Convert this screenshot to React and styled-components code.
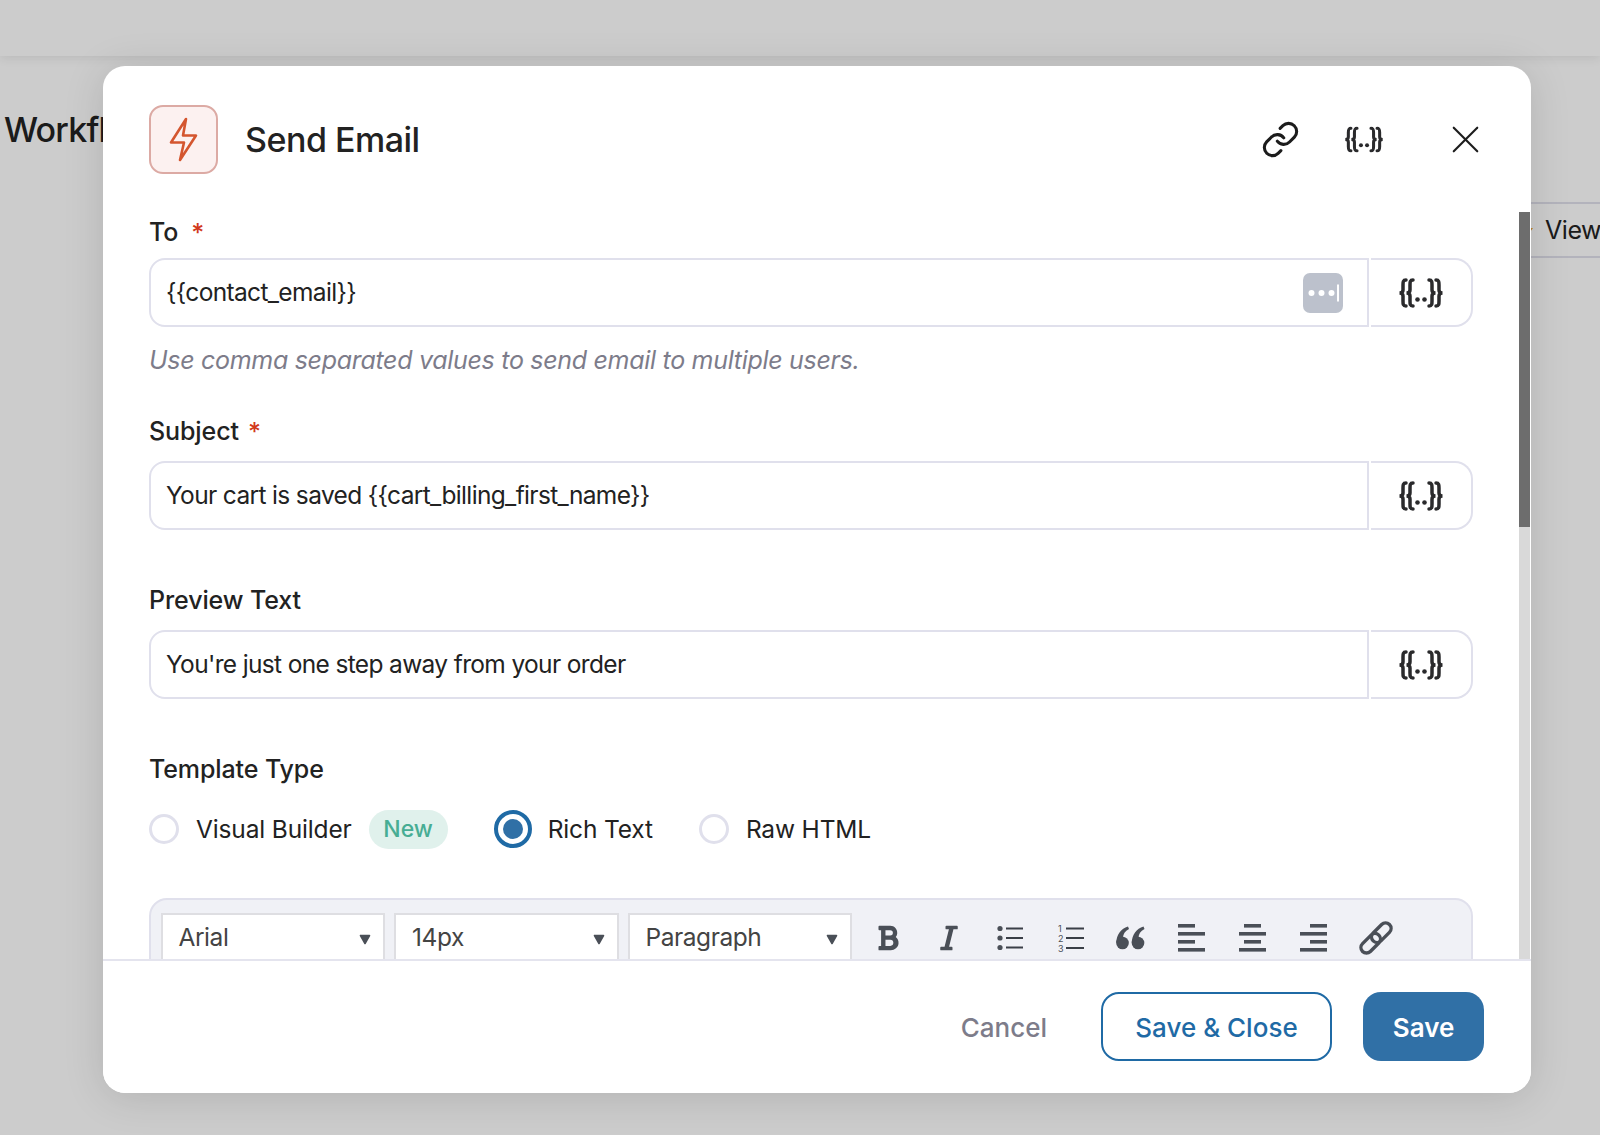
import React from "react";
import styled, { createGlobalStyle } from "styled-components";
import { Link, X } from "lucide-react";
import { FaBold, FaItalic } from "react-icons/fa";

const Global = createGlobalStyle`
  html, body { margin: 0; height: 100%; overflow: hidden; background: #fff; }
  #root { height: 100%; }
  * { box-sizing: border-box; }
  body { font-family: Inter, "Liberation Sans", sans-serif; color: #222; }
`;

const Page = styled.div`
  height: 100%;
  position: relative;
  overflow: hidden;
`;
const TopBar = styled.div`
  height: 56px;
  background: #fff;
  box-shadow: 0 2px 10px rgba(0, 0, 0, 0.09);
`;
const PageRow = styled.div`
  display: flex;
  justify-content: space-between;
  align-items: flex-start;
`;
const PageTitle = styled.h1`
  margin: 53px 0 0 4px;
  font-size: 34px;
  line-height: 42px;
  font-weight: 450;
  letter-spacing: -0.8px;
  color: #222;
`;
const ViewButton = styled.div`
  display: flex;
  align-items: center;
  gap: 11px;
  margin-top: 146px;
  margin-right: -23px;
  height: 56px;
  padding: 0 20px 0 24px;
  border: 2px solid #e0e0ec;
  font-size: 25px;
  letter-spacing: -0.5px;
  color: #222;
  white-space: nowrap;
`;
const Overlay = styled.div`
  position: absolute;
  inset: 0;
  background: rgba(0, 0, 0, 0.2);
`;
const Modal = styled.div`
  position: absolute;
  left: 103px;
  top: 66px;
  width: 1428px;
  height: 1027px;
  background: #fff;
  border-radius: 22px;
  box-shadow: 0 4px 40px rgba(0, 0, 0, 0.13);
  display: flex;
  flex-direction: column;
  overflow: hidden;
`;
const Header = styled.header`
  height: 146px;
  flex: none;
  display: flex;
  align-items: flex-start;
  padding: 39px 0 0 46px;
`;
const BoltBox = styled.div`
  width: 69px;
  height: 69px;
  flex: none;
  border-radius: 14px;
  border: 2px solid #dcaaa4;
  background: #fcf1f0;
  display: flex;
  align-items: center;
  justify-content: center;
`;
const Title = styled.h2`
  margin: 0 0 0 27px;
  font-size: 34px;
  line-height: 69px;
  font-weight: 450;
  letter-spacing: -0.5px;
  color: #222;
  flex: 1;
`;
const HeaderIcons = styled.div`
  display: flex;
  align-items: center;
  height: 68px;
  color: #111;
`;
const HeaderIcon = styled.span`
  width: ${(p) => p.$w}px;
  display: flex;
  justify-content: center;
  color: #1c1c1c;
`;
const Scroller = styled.div`
  position: relative;
  flex: 1;
  min-height: 0;
  overflow: hidden;
  padding: 6px 58px 0 46px;
`;
const ScrollTrack = styled.div`
  position: absolute;
  top: 0;
  bottom: 0;
  right: 1px;
  width: 11px;
  background: #d9d9d9;
`;
const ScrollThumb = styled.div`
  height: 315px;
  background: #6d6d6d;
`;
const FieldLabel = styled.div`
  display: flex;
  font-size: 25px;
  line-height: 28px;
  font-weight: 450;
  letter-spacing: -0.1px;
  color: #222;
  margin-top: ${(p) => p.$top}px;
  margin-bottom: ${(p) => p.$bottom}px;
`;
const Required = styled.span`
  color: #d2391c;
  margin-left: ${(p) => p.$gap}px;
  line-height: 28px;
  position: relative;
  top: 1px;
`;
const InputRow = styled.div`
  display: flex;
  height: 69px;
  gap: 2px;
`;
const InputBox = styled.div`
  flex: 1;
  display: flex;
  align-items: center;
  justify-content: space-between;
  padding: 0 24px 0 15px;
  border: 2px solid #e0e0ec;
  border-radius: 16px 0 0 16px;
  font-size: 24.5px;
  letter-spacing: -0.65px;
  color: #222;
`;
const FieldText = styled.span`
  margin-bottom: 2px;
`;
const AddOn = styled.div`
  width: 102px;
  flex: none;
  display: flex;
  align-items: center;
  justify-content: center;
  border: 2px solid #e0e0ec;
  border-left: 0;
  border-radius: 0 18px 18px 0;
`;
const Hint = styled.div`
  margin-top: 19px;
  font-size: 25px;
  line-height: 28px;
  font-style: italic;
  letter-spacing: -0.3px;
  color: #7d7c8a;
`;
const RadioRow = styled.div`
  display: flex;
  align-items: center;
  height: 40px;
  margin-top: 26px;
`;
const RadioOption = styled.div`
  display: flex;
  align-items: center;
  gap: ${(p) => (p.$checked ? 16 : 17)}px;
  margin-right: 46px;
`;
const RadioCircle = styled.span`
  flex: none;
  display: flex;
  align-items: center;
  justify-content: center;
  width: ${(p) => (p.$checked ? 38 : 30)}px;
  height: ${(p) => (p.$checked ? 38 : 30)}px;
  border-radius: 50%;
  border: ${(p) => (p.$checked ? "4px solid #1f6aa5" : "3.5px solid #e0e0ec")};
  background: #fff;
`;
const RadioDot = styled.span`
  width: 20px;
  height: 20px;
  border-radius: 50%;
  background: #3070a6;
`;
const RadioText = styled.span`
  font-size: 24.5px;
  letter-spacing: -0.15px;
  color: #222;
  white-space: nowrap;
`;
const NewPill = styled.span`
  display: flex;
  align-items: center;
  justify-content: center;
  width: 79px;
  height: 39px;
  border-radius: 20px;
  background: #e0f1ec;
  color: #47ad94;
  font-size: 23px;
  font-weight: 500;
`;
const Toolbar = styled.div`
  display: flex;
  align-items: flex-start;
  margin-top: 49px;
  height: 120px;
  padding: 13px 10px 0 9.5px;
  background: #f0f1f6;
  border: 2px solid #e0e0ec;
  border-radius: 18px;
`;
const SelectBox = styled.div`
  width: 224.5px;
  height: 50px;
  flex: none;
  margin-right: 9px;
  display: flex;
  align-items: center;
  justify-content: space-between;
  padding: 0 12px 0 16px;
  background: #fff;
  border: 2px solid #dedee2;
  font-size: 24.5px;
  letter-spacing: -0.45px;
  color: #444;
`;
const Caret = styled.svg`
  width: 12px;
  height: 11px;
  margin-top: 3px;
`;
const ToolButton = styled.span`
  width: ${(p) => p.$w || 61}px;
  height: 50px;
  flex: none;
  display: flex;
  align-items: center;
  justify-content: center;
  color: #4a4f57;
`;
const ToolGroup = styled.div`
  display: flex;
  margin-left: -3.5px;
`;
const Footer = styled.footer`
  height: 134px;
  flex: none;
  display: flex;
  align-items: center;
  justify-content: flex-end;
  padding: 0 47px 2px 0;
  background: #fff;
  border-top: 2px solid #e4e4ee;
`;
const CancelButton = styled.span`
  font-size: 26px;
  font-weight: 500;
  color: #7d7c8a;
  margin-right: 54px;
  padding-top: 2px;
`;
const OutlineButton = styled.span`
  display: flex;
  align-items: center;
  justify-content: center;
  width: 231px;
  height: 69px;
  margin-right: 31px;
  padding-top: 2px;
  border: 2px solid #1f6aa5;
  border-radius: 18px;
  color: #1f6aa5;
  font-size: 26px;
  font-weight: 500;
`;
const SolidButton = styled.span`
  display: flex;
  align-items: center;
  justify-content: center;
  width: 121px;
  height: 69px;
  padding-top: 2px;
  border-radius: 18px;
  background: #3070a6;
  color: #fff;
  font-size: 26px;
  font-weight: 600;
`;

const Braces = ({ w = 46, h = 30 }) => (
  <svg width={w} height={h} viewBox="0 0 46 30" fill="none" stroke="#2a2a2c" strokeWidth="3.5" strokeLinecap="round">
    <path d="M8 2C5 2 5 4 5 7v5c0 2-1.500 3-3.500 3 2 0 3.500 1 3.500 3v5c0 3 0 5 3 5" />
    <path d="M15 2c-3 0-3 2-3 5v5c0 2-1.500 3-3.500 3 2 0 3.500 1 3.500 3v5c0 3 0 5 3 5" />
    <path d="M38 2c3 0 3 2 3 5v5c0 2 1.500 3 3.500 3-2 0-3.500 1-3.500 3v5c0 3 0 5-3 5" />
    <path d="M31 2c3 0 3 2 3 5v5c0 2 1.500 3 3.500 3-2 0-3.500 1-3.500 3v5c0 3 0 5-3 5" />
    <circle cx="19.500" cy="21.500" r="2.300" fill="#2a2a2c" stroke="none" />
    <circle cx="26.500" cy="21.500" r="2.300" fill="#2a2a2c" stroke="none" />
  </svg>
);

const DotsKey = () => (
  <svg width="40" height="40" viewBox="0 0 40 40">
    <rect width="40" height="40" rx="7" fill="#bcc1cc" />
    <circle cx="8.500" cy="20" r="3" fill="#fff" />
    <circle cx="18.500" cy="20" r="3" fill="#fff" />
    <circle cx="28.500" cy="20" r="3" fill="#fff" />
    <rect x="34" y="11.500" width="2" height="17" fill="#fff" />
  </svg>
);

const Bolt = () => (
  <svg width="30" height="46" viewBox="0 0 30 46" fill="none" stroke="#d4562f" strokeWidth="2.6" strokeLinejoin="round">
    <path d="M17 2 2 25.500h13L11 43l16-24.500H14z" />
  </svg>
);

const DownCaret = () => (
  <Caret viewBox="0 0 12 11">
    <path d="M1.500 1.500h9L6 9.500z" fill="#4a4f57" stroke="#4a4f57" strokeWidth="1.600" strokeLinejoin="round" />
  </Caret>
);

const ListIcon = () => (
  <svg width="26" height="26" viewBox="0 0 26 26">
    <circle cx="3" cy="3.500" r="2.600" fill="#4a4f57" />
    <circle cx="3" cy="13" r="2.600" fill="#4a4f57" />
    <circle cx="3" cy="22.500" r="2.600" fill="#4a4f57" />
    <path d="M9 3.500h17M9 13h17M9 22.500h17" stroke="#3a3f47" strokeWidth="1.800" />
  </svg>
);

const NumberedIcon = () => (
  <svg width="26" height="28" viewBox="0 0 26 28">
    <text x="0" y="8" fontSize="9" fontFamily="Inter, sans-serif" fill="#4a4f57">1</text>
    <text x="0" y="18" fontSize="9" fontFamily="Inter, sans-serif" fill="#4a4f57">2</text>
    <text x="0" y="27.500" fontSize="9" fontFamily="Inter, sans-serif" fill="#4a4f57">3</text>
    <path d="M8 4.500h18M8 14h18M8 24h18" stroke="#3a3f47" strokeWidth="1.800" />
  </svg>
);

const QuoteIcon = () => (
  <svg width="29" height="24" viewBox="0 0 29 24" fill="#4a4f57">
    <circle cx="6.500" cy="17" r="6.300" />
    <path d="M.3 17C.3 9 5 2.500 12 .5l1 2.600C9 5 7 8.500 7 12z" />
    <circle cx="22" cy="17" r="6.300" />
    <path d="M15.800 17c0-8 4.700-14.500 11.700-16.500l1 2.600c-4 1.900-6 5.400-6 8.900z" />
  </svg>
);

const AlignIcon = ({ align }) => {
  const x = (w) => (align === "left" ? 0 : align === "center" ? (27 - w) / 2 : 27 - w);
  return (
    <svg width="27" height="28" viewBox="0 0 27 28" fill="#4a4f57">
      <rect x={x(17)} y="0" width="17" height="3.600" />
      <rect x={x(27)} y="8" width="27" height="3.600" />
      <rect x={x(17)} y="16" width="17" height="3.600" />
      <rect x={x(27)} y="24" width="27" height="3.600" />
    </svg>
  );
};

const ChainIcon = () => (
  <svg width="34" height="34" viewBox="0 0 34 34" fill="none" stroke="#4a4f57" strokeWidth="3.400">
    <g transform="rotate(-45 17 17)">
      <rect x="-2" y="11.500" width="23" height="11" rx="5.500" />
      <rect x="13" y="11.500" width="23" height="11" rx="5.500" />
    </g>
  </svg>
);

const Field = ({ label, gap, top, bottom, value, dots }) => (
  <>
    <FieldLabel $top={top} $bottom={bottom}>
      {label}
      {gap ? <Required $gap={gap}>*</Required> : null}
    </FieldLabel>
    <InputRow>
      <InputBox>
        <FieldText>{value}</FieldText>
        {dots ? <DotsKey /> : null}
      </InputBox>
      <AddOn>
        <Braces />
      </AddOn>
    </InputRow>
  </>
);

const Radio = ({ checked, label, children }) => (
  <RadioOption $checked={checked}>
    <RadioCircle $checked={checked}>{checked ? <RadioDot /> : null}</RadioCircle>
    <RadioText>{label}</RadioText>
    {children}
  </RadioOption>
);

const Select = ({ label }) => (
  <SelectBox>
    <FieldText>{label}</FieldText>
    <DownCaret />
  </SelectBox>
);

export default function App() {
  return (
    <Page>
      <Global />
      <TopBar />
      <PageRow>
        <PageTitle>Workflows</PageTitle>
        <ViewButton>
          <svg width="12" height="20" viewBox="0 0 12 20">
            <path d="M7 1 1 11h4l-2 8 8-11H6z" fill="#e8a33d" />
          </svg>
          View
        </ViewButton>
      </PageRow>
      <Overlay />
      <Modal>
        <Header>
          <BoltBox>
            <Bolt />
          </BoltBox>
          <Title>Send Email</Title>
          <HeaderIcons>
            <HeaderIcon $w={80}>
              <Link size={39} strokeWidth={1.9} />
            </HeaderIcon>
            <HeaderIcon $w={88}>
              <Braces w={40} h={27} />
            </HeaderIcon>
            <HeaderIcon $w={114}>
              <X size={47} strokeWidth={1.1} />
            </HeaderIcon>
            <HeaderIcon $w={9} />
          </HeaderIcons>
        </Header>
        <Scroller>
          <Field label="To" gap={13} top={0} bottom={12} value="{{contact_email}}" dots />
          <Hint>Use comma separated values to send email to multiple users.</Hint>
          <Field label="Subject" gap={9} top={43} bottom={16} value="Your cart is saved {{cart_billing_first_name}}" />
          <Field label="Preview Text" top={56} bottom={16} value="You're just one step away from your order" />
          <FieldLabel $top={56} $bottom={0}>Template Type</FieldLabel>
          <RadioRow>
            <Radio label="Visual Builder">
              <NewPill>New</NewPill>
            </Radio>
            <Radio checked label="Rich Text" />
            <Radio label="Raw HTML" />
          </RadioRow>
          <Toolbar>
            <Select label="Arial" />
            <Select label="14px" />
            <Select label="Paragraph" />
            <ToolGroup>
              <ToolButton><FaBold size={28} /></ToolButton>
              <ToolButton><FaItalic size={28} /></ToolButton>
              <ToolButton><ListIcon /></ToolButton>
              <ToolButton $w={60}><NumberedIcon /></ToolButton>
              <ToolButton $w={60}><QuoteIcon /></ToolButton>
              <ToolButton><AlignIcon align="left" /></ToolButton>
              <ToolButton><AlignIcon align="center" /></ToolButton>
              <ToolButton><AlignIcon align="right" /></ToolButton>
              <ToolButton $w={65}><ChainIcon /></ToolButton>
            </ToolGroup>
          </Toolbar>
          <ScrollTrack>
            <ScrollThumb />
          </ScrollTrack>
        </Scroller>
        <Footer>
          <CancelButton>Cancel</CancelButton>
          <OutlineButton>Save &amp; Close</OutlineButton>
          <SolidButton>Save</SolidButton>
        </Footer>
      </Modal>
    </Page>
  );
}
